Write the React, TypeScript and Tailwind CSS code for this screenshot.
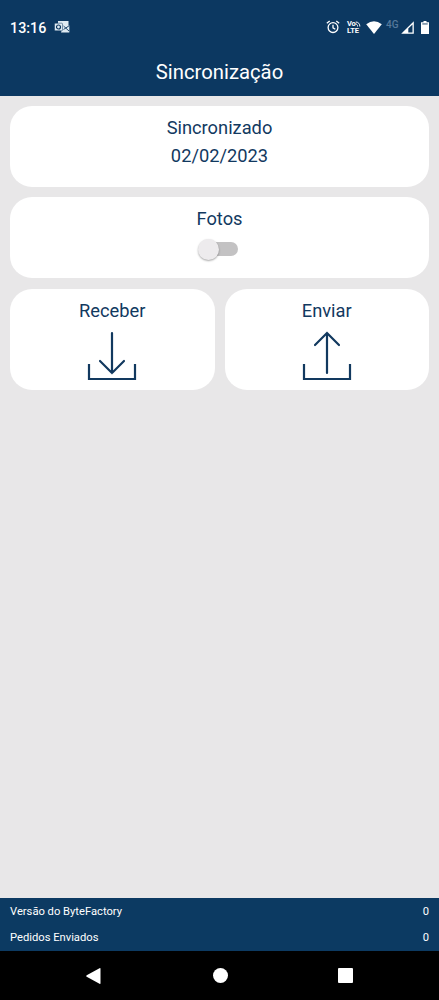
import type { ReactNode } from "react";

const counters = [
  { label: "Versão do ByteFactory", value: 0 },
  { label: "Pedidos Enviados", value: 0 },
];

function StatusBar() {
  return (
    <div className="flex h-[54px] items-center pl-[10px] pr-[10px]">
      <span className="pt-[2px] text-[14.300px] font-medium leading-5">13:16</span>
      <svg className="ml-[8px] h-[14px] w-4" viewBox="0 0 16 14">
        <path d="M4 1h10.500v5L9 9.500 4 6Z" fill="#dfeaf2" />
        <path d="M8 8.500 15.300 5v7.500H7Z" fill="#dfeaf2" />
        <path d="m9.500 6 5.500 5M9.500 9.500 15.500 5.500" stroke="#0c3861" strokeWidth="0.900" />
        <rect x="0.500" y="3.200" width="8" height="7.600" rx="0.800" fill="#dfeaf2" stroke="#0c3861" strokeWidth="0.500" />
        <circle cx="4.500" cy="7" r="2" fill="none" stroke="#0c3861" strokeWidth="1.200" />
      </svg>
      <div className="ml-auto flex items-center">
        <svg className="h-[14px] w-[14px]" viewBox="0 0 14 14" fill="none" stroke="#fff" strokeWidth="1.300">
          <circle cx="7" cy="7.600" r="4.900" />
          <path d="M7 4.700v3.200l2.300 1.400M.8 3.300l2.900-2.400M13.200 3.300l-2.900-2.400" />
        </svg>
        <div className="ml-[7px] w-[14px] text-[7.500px] font-bold leading-[7px]">
          <div className="flex items-center">
            <span className="tracking-[-0.3px]">Vo</span>
            <svg className="h-[6px] w-[6px] shrink-0" viewBox="0 0 6 6" fill="none" stroke="#fff" strokeWidth="1">
              <path d="M.5 3a2 2 0 0 1 2 2.500M.8 1a4 4 0 0 1 4 4.500" />
            </svg>
          </div>
          <div>LTE</div>
        </div>
        <svg className="ml-[5px] h-[13px] w-4" viewBox="0 0 16 13">
          <path d="M.2 3.300Q8-2.600 15.800 3.300L8 13Z" fill="#fff" />
        </svg>
        <span className="-mt-[5px] ml-1 w-[13px] text-[10px] font-medium leading-3 text-[#56799b]">4G</span>
        <svg className="ml-[2px] h-[13px] w-[13px]" viewBox="0 0 13 13">
          <path d="M12.800.2v12.600H.2ZM11.500 3.400 7.300 7.600v4h4.200Z" fill="#fff" fillRule="evenodd" />
        </svg>
        <svg className="ml-[7px] h-[13px] w-2" viewBox="0 0 8 13">
          <path d="M2.500 0h3v1.300H8V13H0V1.300h2.500Z" fill="#fff" />
          <path d="M1.300 2.500h5.400v.9H1.300Z" fill="#0c3861" />
        </svg>
      </div>
    </div>
  );
}

function Card({ title, className, children }: { title: string; className: string; children: ReactNode }) {
  return (
    <section className={`flex flex-col items-center rounded-[22px] bg-white pt-2 ${className}`}>
      <h2 className="text-[18.300px] leading-7">{title}</h2>
      {children}
    </section>
  );
}

function TransferIcon({ direction }: { direction: "down" | "up" }) {
  return (
    <svg
      className="mt-[6px] h-[50px] w-[50px]"
      viewBox="0 0 50 50"
      fill="none"
      stroke="#12395f"
      strokeWidth="2.200"
      strokeLinecap="round">
      <path d="M2 34v14h46V34" strokeLinecap="square" />
      {direction === "down" ? <path d="M25 2v40M13 30l12 12 12-12" /> : <path d="M25 42V2M13 14 25 2l12 12" />}
    </svg>
  );
}

export default function App() {
  return (
    <div className="flex h-[1000px] w-[439px] flex-col bg-[#e8e7e8] font-['Roboto',sans-serif] text-white">
      <header className="h-[96px] shrink-0 bg-[#0c3861]">
        <StatusBar />
        <h1 className="text-center text-[20.300px] leading-9">Sincronização</h1>
      </header>

      <main className="flex grow flex-col px-[10px] pt-[10px] text-[#12395f]">
        <Card title="Sincronizado" className="h-[81px]">
          <p className="text-[18.300px] leading-7">02/02/2023</p>
        </Card>

        <Card title="Fotos" className="mt-[10px] h-[81px]">
          <button
            role="switch"
            aria-checked="false"
            aria-label="Fotos"
            className="mr-px mt-[9px] flex h-[14px] w-[38px] items-center rounded-full bg-[#c3c2c3]">
            <span className="-ml-[2px] h-[21px] w-[21px] shrink-0 rounded-full bg-[#edebed] shadow-[0_1px_2px_rgba(0,0,0,0.350)]" />
          </button>
        </Card>

        <div className="mt-[11px] grid grid-cols-2 gap-[10px]">
          <Card title="Receber" className="h-[101px]">
            <TransferIcon direction="down" />
          </Card>
          <Card title="Enviar" className="h-[101px]">
            <TransferIcon direction="up" />
          </Card>
        </div>
      </main>

      <footer className="h-[53px] shrink-0 bg-[#0c3a62] px-[10px] pt-px text-[11.200px]">
        {counters.map(({ label, value }) => (
          <div key={label} className="flex h-[26px] items-center justify-between">
            <span>{label}</span>
            <span>{value}</span>
          </div>
        ))}
      </footer>

      <nav className="flex h-[49px] shrink-0 items-center justify-center bg-black pr-px">
        <svg className="h-4 w-[15px]" viewBox="0 0 15 16" fill="#fff">
          <path d="M.7 7.200 13.500.2q1-.5 1 .5v14.600q0 1-1 .5L.7 8.800q-1-.8 0-1.600Z" />
        </svg>
        <span className="ml-[112px] h-[15px] w-[15px] rounded-full bg-white" />
        <span className="ml-[110px] h-[15px] w-[15px] rounded-[1px] bg-white" />
      </nav>
    </div>
  );
}
